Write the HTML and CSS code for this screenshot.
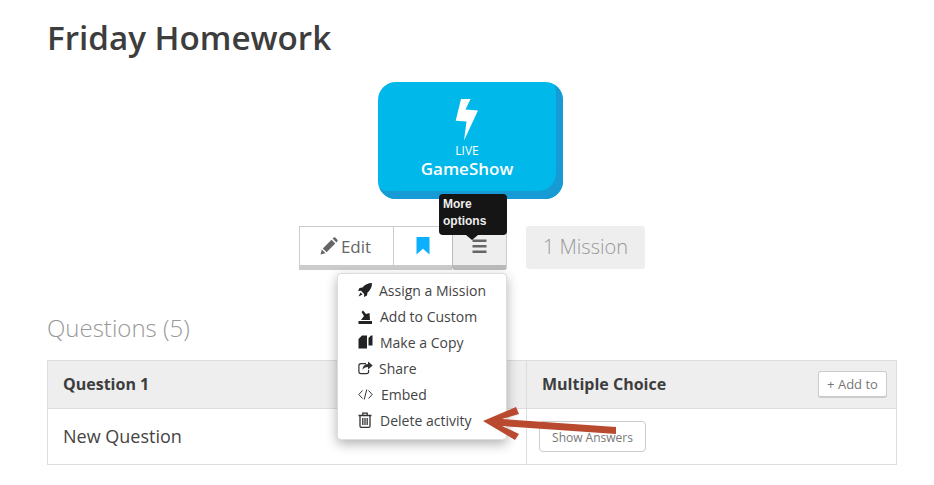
FILE: index.html
```html
<!DOCTYPE html>
<html lang="en">
<head>
    <meta charset="UTF-8">
    <title>Friday Homework</title>
    <link rel="stylesheet" href="styles.css">
</head>
<body>
    <div class="page">
        <h1>Friday Homework</h1>

        <div class="start-row">
            <a class="live-card">
                <svg class="bolt" width="24" height="44" viewBox="0 0 24 44">
                    <path d="M6 1H15.500L10.500 11.500L23 12.500L9 42.500L11.500 23.500L0.700 22.700Z" fill="#fff"/>
                </svg>
                <span class="live-label">LIVE</span>
                <span class="live-name">GameShow</span>
            </a>
        </div>

        <div class="action-row">
            <div class="action-group">
                <button class="action-btn edit-btn">
                    <svg width="18" height="18" viewBox="0 0 18 18">
                        <path d="M0.500 17.500L1.800 12.500L5.500 16.200ZM2.800 11.400L11.500 2.700L15.300 6.500L6.600 15.200ZM12.600 1.600L13.700 0.600Q14.500 0 15.300 0.600L17.400 2.700Q18 3.500 17.400 4.300L16.400 5.400Z" fill="#666"/>
                    </svg>
                    Edit
                </button>
                <button class="action-btn bookmark-btn">
                    <svg width="14" height="18" viewBox="0 0 14 18">
                        <path d="M0.500 0H13.500V17.500L7 11.800L0.500 17.500Z" fill="#0cb0ff"/>
                    </svg>
                </button>
                <div class="more-wrap">
                    <button class="action-btn more-btn">
                        <svg width="15" height="15" viewBox="0 0 15 15">
                            <path d="M0.500 0.500H14.500V3H0.500ZM0.500 6H14.500V8.500H0.500ZM0.500 11.500H14.500V14H0.500Z" fill="#666"/>
                        </svg>
                    </button>
                    <div class="tooltip">More options</div>
                    <ul class="more-menu">
                        <li>
                            <svg width="14" height="14" viewBox="0 0 14 14"><path d="M14 0Q8 0 4.500 4.500L1.500 5L0 8L3 7.800L6.200 11L6 14L9 12.500L9.500 9.500Q14 6 14 0ZM2.500 9.500L0.500 13.500L4.500 11.500Z" fill="#222"/></svg>
                            <span>Assign a Mission</span>
                        </li>
                        <li>
                            <svg width="15" height="15" viewBox="0 0 15 15"><path d="M0.500 12H14V15H0.500ZM3 11L6 7L3.500 3L5 1.500L8 5L11.500 4L12 11Z" fill="#222"/></svg>
                            <span>Add to Custom</span>
                        </li>
                        <li>
                            <svg width="15" height="15" viewBox="0 0 15 15"><path d="M0.500 4L4 0.500H9V13.500H0.500ZM10.500 3L13 0.500H14.500V10.500H10.500Z" fill="#222"/></svg>
                            <span>Make a Copy</span>
                        </li>
                        <li class="share-item">
                            <svg width="15" height="14" viewBox="0 0 15 14"><path d="M3 2H8V3.200H3Q1.500 3.200 1.500 4.700V10.500Q1.500 12 3 12H8.500Q10 12 10 10.500V9H11.200V10.500Q11.200 13.200 8.500 13.200H3Q0.300 13.200 0.300 10.500V4.700Q0.300 2 3 2ZM10 0.500L14.700 4.500L10 8.500V6Q6 6 4.500 9Q4.500 3.500 10 3Z" fill="#333"/></svg>
                            <span>Share</span>
                        </li>
                        <li class="embed-item">
                            <svg width="15" height="11" viewBox="0 0 15 11"><path d="M4.500 1.500L0.800 5.500L4.500 9.500M10.500 1.500L14.200 5.500L10.500 9.500M8.800 0.500L6.200 10.500" fill="none" stroke="#333" stroke-width="1"/></svg>
                            <span>Embed</span>
                        </li>
                        <li class="delete-item">
                            <svg width="14" height="16" viewBox="0 0 14 16"><path d="M0.500 3.500H13.500M2 3.500V14Q2 15.300 3.300 15.300H10.700Q12 15.300 12 14V3.500M4.800 3V1.200H9.200V3M4.800 6V13M7 6V13M9.200 6V13" fill="none" stroke="#333" stroke-width="1.300"/></svg>
                            <span>Delete activity</span>
                        </li>
                    </ul>
                </div>
            </div>
            <div class="mission-btn">1 Mission</div>
        </div>

        <h2>Questions (5)</h2>

        <div class="question-table">
            <div class="cell head-cell">Question 1</div>
            <div class="cell head-cell head-right">
                Multiple Choice
                <button class="add-btn">+ Add to</button>
            </div>
            <div class="cell body-cell">New Question</div>
            <div class="cell body-cell answer-cell">
                <button class="answers-btn">Show Answers</button>
            </div>
        </div>
    </div>

    <svg class="red-arrow" width="136" height="36" viewBox="0 0 136 36">
        <path d="M1 15L34 1L37 8L20 13L134 21V28L20 20L37 28L33 34Z" fill="#b9492f"/>
    </svg>
</body>
</html>
```

FILE: styles.css
```css
body {
    margin: 0;
    padding: 0;
    font-family: 'Open Sans', sans-serif;
    background-color: #fff;
    color: #3d3d3d;
}

.page {
    padding: 0 37px 0 47px;
}

h1 {
    margin: 0;
    padding-top: 16px;
    font-size: 33.2px;
    line-height: 44px;
    font-weight: 600;
    color: #3d3d3d;
}

.start-row {
    display: flex;
    justify-content: center;
    margin-top: 22px;
    padding-right: 3px;
}

.live-card {
    width: 185px;
    height: 117px;
    box-sizing: border-box;
    padding: 16px 7px 0 0;
    border-radius: 18px;
    background-color: #00b8e9;
    box-shadow: inset -7px -8px 0 #169bd5;
    color: #fff;
    display: flex;
    flex-direction: column;
    align-items: center;
}

.bolt {
    margin-left: -1px;
    flex: none;
}

.live-label {
    margin-top: 1px;
    font-size: 12px;
    line-height: 16px;
}

.live-name {
    font-size: 17px;
    line-height: 20px;
    font-weight: 600;
}

.action-row {
    display: flex;
    justify-content: center;
    align-items: flex-start;
    gap: 19px;
    margin-top: 27px;
}

.action-group {
    display: flex;
}

.action-btn {
    height: 44px;
    box-sizing: border-box;
    padding: 0;
    background-color: #fff;
    border: 1px solid #ccc;
    border-bottom: 5px solid #ccc;
    border-right: none;
    font-family: inherit;
    font-size: 17px;
    color: #666;
    display: flex;
    align-items: center;
    justify-content: center;
}

.edit-btn {
    width: 94px;
    gap: 3px;
    padding-right: 2px;
}

.bookmark-btn {
    width: 59px;
}

.more-wrap {
    position: relative;
}

.more-btn {
    width: 55px;
    background-color: #eee;
    border-left: 1px solid #bbb;
    border-right: 1px solid #ccc;
    border-bottom-color: #bbb;
    border-radius: 0 0 3px 3px;
}

.tooltip {
    position: absolute;
    left: -13px;
    top: -32px;
    width: 68px;
    height: 41px;
    box-sizing: border-box;
    padding: 2px 4px;
    background-color: #151515;
    border-radius: 4px;
    font-family: 'Liberation Sans', sans-serif;
    font-size: 12px;
    font-weight: bold;
    line-height: 17px;
    color: #eee;
}

.tooltip::after {
    content: "";
    position: absolute;
    left: 27px;
    bottom: -5px;
    border-left: 6px solid transparent;
    border-right: 6px solid transparent;
    border-top: 5px solid #151515;
}

.more-menu {
    position: absolute;
    left: -115px;
    top: 47px;
    width: 170px;
    height: 167px;
    box-sizing: border-box;
    margin: 0;
    padding: 3px 0 0 20px;
    list-style: none;
    background-color: #fff;
    border: 1px solid #ddd;
    border-radius: 4px;
    box-shadow: 0 4px 12px rgba(0, 0, 0, 0.3);
    font-size: 14px;
    color: #444;
    z-index: 2;
}

.more-menu li {
    height: 26px;
    display: flex;
    align-items: center;
    gap: 7px;
}

.more-menu li svg {
    flex: none;
}

.more-menu .share-item {
    gap: 6px;
}

.more-menu .embed-item,
.more-menu .delete-item {
    gap: 8px;
}

.mission-btn {
    width: 119px;
    height: 43px;
    background-color: #eee;
    border-radius: 3px;
    font-size: 20px;
    font-weight: 300;
    line-height: 42px;
    text-align: center;
    color: #999;
}

h2 {
    margin: 43px 0 0;
    font-size: 24px;
    line-height: 30px;
    font-weight: 300;
    color: #999;
}

.question-table {
    margin-top: 17px;
    width: 850px;
    box-sizing: border-box;
    display: grid;
    grid-template-columns: 478px 1fr;
    border: 1px solid #ddd;
    border-bottom-width: 1px;
}

.cell {
    box-sizing: border-box;
    display: flex;
    align-items: center;
}

.head-cell {
    height: 48px;
    padding-left: 15px;
    padding-bottom: 2px;
    background-color: #eee;
    border-bottom: 1px solid #ddd;
    font-size: 16px;
    font-weight: 700;
    color: #3d3d3d;
}

.head-right {
    justify-content: space-between;
    border-left: 1px solid #ddd;
    padding-right: 9px;
}

.body-cell {
    height: 55px;
    padding-left: 15px;
    padding-bottom: 1px;
    font-size: 18px;
    color: #444;
}

.answer-cell {
    border-left: 1px solid #ddd;
    padding-left: 12px;
    padding-bottom: 0;
}

.add-btn {
    width: 69px;
    height: 27px;
    margin-top: 2px;
    padding: 0;
    background-color: #fff;
    border: 1px solid #ccc;
    border-bottom-width: 2px;
    border-radius: 3px;
    font-family: inherit;
    font-size: 13px;
    color: #777;
}

.answers-btn {
    width: 107px;
    height: 31px;
    padding: 1px 0 0;
    background-color: #fff;
    border: 1px solid #ccc;
    border-radius: 4px;
    font-family: inherit;
    font-size: 12px;
    color: #777;
}

.red-arrow {
    position: absolute;
    left: 482px;
    top: 406px;
    z-index: 3;
}
```
